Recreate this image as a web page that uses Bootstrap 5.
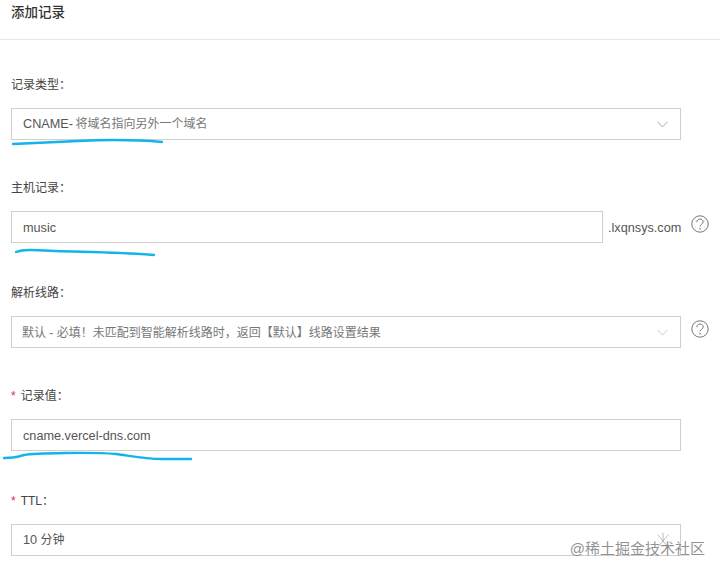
<!DOCTYPE html>
<html lang="zh-CN">
<head>
    <meta charset="UTF-8">
    <meta name="viewport" content="width=device-width, initial-scale=1.0">
    <title>添加记录</title>
    <link href="https://cdn.jsdelivr.net/npm/bootstrap@5.3.0/dist/css/bootstrap.min.css" rel="stylesheet">
    <style>
        html, body {
            height: 573px;
            overflow: hidden;
        }
        body {
            background: #fff;
            color: #444;
            font-family: "Liberation Sans", "Noto Sans CJK SC", sans-serif;
            font-size: 12px;
        }
        .page-wrap {
            position: relative;
            height: 573px;
            overflow: hidden;
        }
        .dlg-head {
            height: 40px;
            padding: 4px 11px 0;
            border-bottom: 1px solid #e6e6e6;
            font-size: 13.5px;
            font-weight: 500;
            line-height: 17px;
            color: #333;
        }
        .dlg-form {
            padding: 36px 11px 0;
        }
        .field-block {
            margin-bottom: 39px;
        }
        .field-block:nth-child(even) {
            margin-bottom: 41px;
        }
        .field-label {
            display: block;
            height: 32px;
            margin: 0;
            padding-top: 1px;
            font-size: 12px;
            line-height: 17px;
            color: #444;
        }
        .req-star {
            color: #c9353b;
            margin-right: 5px;
        }
        .field-row {
            display: flex;
            align-items: flex-start;
        }
        .box-wrap {
            width: 670px;
            flex: none;
        }
        .box-wrap-short {
            width: 592px;
            flex: none;
        }
        .form-control.rec-box {
            display: flex;
            align-items: center;
            justify-content: space-between;
            height: 32px;
            min-height: 32px;
            padding: 1px 12px 0 11px;
            border: 1px solid #cfcfcf;
            border-radius: 0;
            font-size: 12px;
            color: #555;
            background: #fff;
        }
        .form-control.latin-val, .latin-val {
            font-size: 12.7px;
        }
        .rec-box .dim-text {
            color: #777;
            margin-left: -1px;
        }
        .rec-box svg {
            flex: none;
        }
        .domain-suffix {
            width: 78px;
            flex: none;
            padding: 9px 0 0 5px;
            font-size: 12.7px;
            line-height: 17px;
            color: #555;
            white-space: nowrap;
        }
        .help-mark {
            flex: none;
            margin: 4px 0 0 10px;
        }
        .pen-marks {
            position: absolute;
            left: 0;
            top: 0;
            pointer-events: none;
        }
        .site-mark {
            position: absolute;
            right: 15px;
            top: 539px;
            font-size: 15px;
            line-height: 20px;
            color: rgba(125, 125, 125, .85);
        }
    </style>
</head>
<body>
    <div class="page-wrap">
        <div class="dlg-head">添加记录</div>

        <form class="dlg-form">
            <div class="field-block">
                <label class="field-label">记录类型：</label>
                <div class="box-wrap">
                    <div class="form-control rec-box">
                        <span><span class="latin-val">CNAME-</span> <span class="dim-text">将域名指向另外一个域名</span></span>
                        <svg width="11" height="7" viewBox="0 0 11 7"><path d="M.5.8 5.5 6l5-5.2" fill="none" stroke="#aaa"/></svg>
                    </div>
                </div>
            </div>

            <div class="field-block">
                <label class="field-label">主机记录：</label>
                <div class="field-row">
                    <div class="box-wrap-short">
                        <input class="form-control rec-box latin-val" type="text" value="music">
                    </div>
                    <span class="domain-suffix">.lxqnsys.com</span>
                    <svg class="help-mark" width="18" height="18" viewBox="0 0 18 18"><circle cx="9" cy="9" r="8.2" fill="none" stroke="#777"/><path d="M5.8 7.2C5.8 5.2 7.2 4 9 4s3.200 1.100 3.200 2.900c0 2.300-3.200 2.400-3.200 4.600" fill="none" stroke="#777"/><circle cx="9" cy="13.700" r=".8" fill="#777"/></svg>
                </div>
            </div>

            <div class="field-block">
                <label class="field-label">解析线路：</label>
                <div class="field-row">
                    <div class="box-wrap">
                        <div class="form-control rec-box">
                            <span class="dim-text">默认 - 必填！未匹配到智能解析线路时，返回【默认】线路设置结果</span>
                            <svg width="11" height="7" viewBox="0 0 11 7"><path d="M.5.8 5.5 6l5-5.2" fill="none" stroke="#ccc"/></svg>
                        </div>
                    </div>
                    <svg class="help-mark" width="18" height="18" viewBox="0 0 18 18"><circle cx="9" cy="9" r="8.2" fill="none" stroke="#777"/><path d="M5.8 7.2C5.8 5.2 7.2 4 9 4s3.200 1.100 3.200 2.900c0 2.300-3.200 2.400-3.200 4.600" fill="none" stroke="#777"/><circle cx="9" cy="13.700" r=".8" fill="#777"/></svg>
                </div>
            </div>

            <div class="field-block">
                <label class="field-label"><span class="req-star">*</span>记录值：</label>
                <div class="box-wrap">
                    <input class="form-control rec-box latin-val" type="text" value="cname.vercel-dns.com">
                </div>
            </div>

            <div class="field-block">
                <label class="field-label"><span class="req-star">*</span>TTL：</label>
                <div class="box-wrap">
                    <div class="form-control rec-box"><span><span class="latin-val">10</span> 分钟</span></div>
                </div>
            </div>
        </form>

        <svg class="pen-marks" width="720" height="573" viewBox="0 0 720 573" fill="none" stroke="#12b4ea" stroke-width="2.4" stroke-linecap="round">
            <path d="M13 144c20-1 45-2 65-3s50-2 84 1"/>
            <path d="M16 252c8-3 20-2 40-1s60 1 98 4"/>
            <path d="M4 458c10 0 14-1 20-3 10-2 70-3 92-1 15 2 30 5 45 5h30"/>
            <path d="M658 535l10 12M668 535l-10 12M663 533v8" stroke="#aaa" stroke-width=".8"/>
        </svg>

        <div class="site-mark">@稀土掘金技术社区</div>
    </div>
    <script src="https://cdn.jsdelivr.net/npm/bootstrap@5.3.0/dist/js/bootstrap.bundle.min.js"></script>
</body>
</html>
